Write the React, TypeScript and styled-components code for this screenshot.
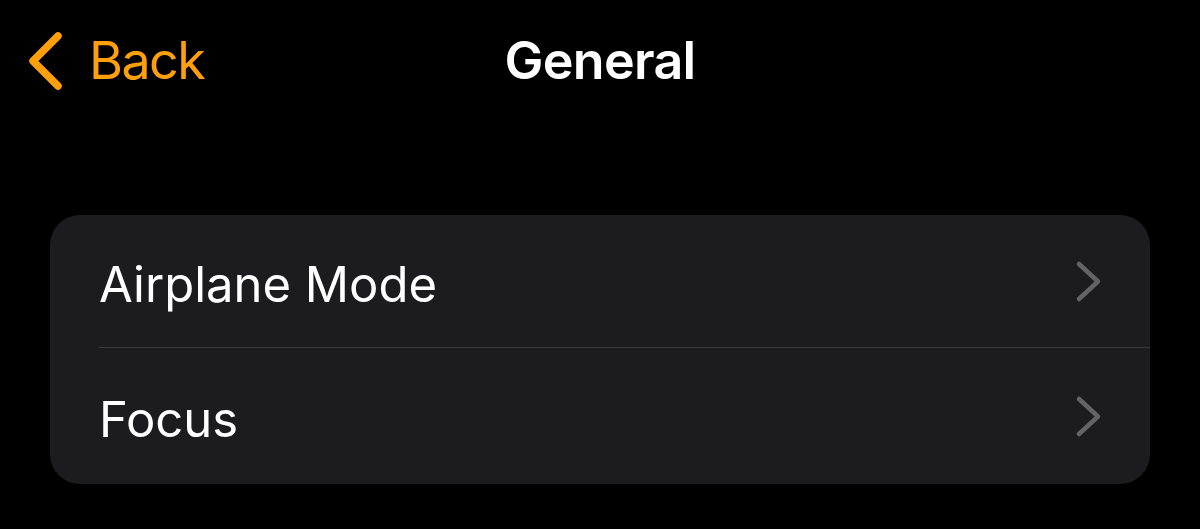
import styled, { createGlobalStyle } from 'styled-components';

const GlobalStyle = createGlobalStyle`
  html, body {
    margin: 0;
    padding: 0;
    background: #000;
  }
  body {
    font-family: Inter, "Noto Sans", "Liberation Sans", sans-serif;
    color: #fff;
    -webkit-font-smoothing: antialiased;
  }
`;

const ITEMS = ['Airplane Mode', 'Focus'];

const BackChevron = () => (
  <svg width="44" height="66" viewBox="0 0 44 66" fill="none">
    <polyline
      points="34,8 9,33 34,58"
      stroke="#ff9f0a"
      strokeWidth="7.5"
      strokeLinecap="round"
      strokeLinejoin="round"
    />
  </svg>
);

const RowChevron = () => (
  <svg width="31" height="47" viewBox="0 0 31 47" fill="none">
    <polyline
      points="6,6 25,23.5 6,41"
      stroke="#636368"
      strokeWidth="4.5"
      strokeLinecap="round"
      strokeLinejoin="round"
    />
  </svg>
);

export default function App() {
  return (
    <>
      <GlobalStyle />
      <Screen>
        <NavBar>
          <BackButton>
            <BackChevron />
            <BackLabel>Back</BackLabel>
          </BackButton>
          <Title>General</Title>
        </NavBar>
        <Card>
          {ITEMS.map((item, i) => (
            <Row key={item} $last={i === ITEMS.length - 1}>
              <RowLabel>{item}</RowLabel>
              <RowChevron />
            </Row>
          ))}
        </Card>
      </Screen>
    </>
  );
}

const Screen = styled.div`
  width: 1200px;
  height: 529px;
  background: #000;
  overflow: hidden;
  display: flex;
  flex-direction: column;
`;

const NavBar = styled.div`
  position: relative;
  display: flex;
  justify-content: center;
  height: 124px;
`;

const BackButton = styled.div`
  position: absolute;
  left: 24px;
  top: 28px;
  display: flex;
  align-items: center;
  gap: 21px;
  color: #ff9f0a;
`;

const BackLabel = styled.span`
  font-size: 52px;
  font-weight: 400;
  letter-spacing: -1.6px;
  line-height: 1;
  margin-bottom: 0;
`;

const Title = styled.h1`
  margin: 35px 0 0 0;
  font-size: 52px;
  font-weight: 600;
  letter-spacing: -0.7px;
  line-height: 1;
`;

const Card = styled.div`
  margin: 91px 50px 0 50px;
  background: #1c1c1e;
  border-radius: 30px;
  overflow: hidden;
`;

const Row = styled.div<{ $last: boolean }>`
  display: flex;
  align-items: center;
  justify-content: space-between;
  height: ${p => (p.$last ? 136 : 133)}px;
  margin-left: 49px;
  padding-right: 46px;
  box-sizing: border-box;
  border-bottom: ${p => (p.$last ? 'none' : '1.5px solid #3a3a3c')};
`;

const RowLabel = styled.span`
  font-size: 49px;
  font-weight: 400;
  letter-spacing: 0;
  line-height: 1;
  margin-top: 6px;
`;
